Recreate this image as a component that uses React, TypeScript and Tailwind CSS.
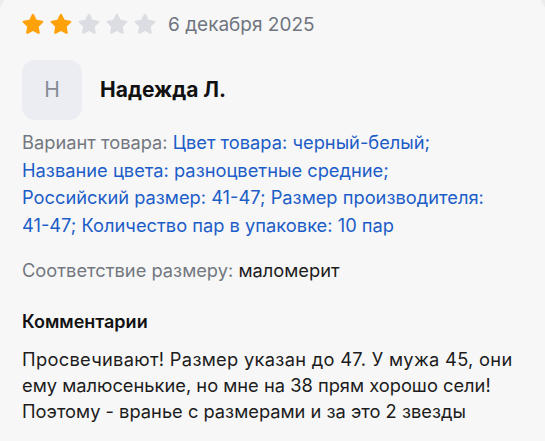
import React from "react";

const Star = ({ filled }: { filled: boolean }) => (
  <svg width="26" height="26" viewBox="0 0 24 24" className="block">
    <path
      d="M12 2.6c.4 0 .7.2.9.6l2.4 4.9 5.3.8c.9.1 1.2 1.2.6 1.8l-3.9 3.8.9 5.4c.2.9-.8 1.5-1.5 1.1L12 18.5l-4.8 2.5c-.8.4-1.7-.2-1.5-1.1l.9-5.4-3.9-3.8c-.6-.6-.3-1.7.6-1.8l5.3-.8 2.4-4.9c.2-.4.6-.6 1-.6z"
      fill={filled ? "#ffa20a" : "#dcdde2"}
    />
  </svg>
);

export default function App() {
  return (
    <div
      className="w-[545px] h-[441px] overflow-hidden bg-[#ececec]"
      style={{ fontFamily: "Inter, 'Noto Sans', sans-serif" }}
    >
      <div className="h-[470px] -mt-[10px] -mx-[2px] rounded-[28px] bg-[#f7f7f7] pl-[24px] pr-4 pt-[20px]">
        <div className="flex items-center mt-[1px]">
          <div className="flex gap-[2px] -ml-[2px]">
            <Star filled />
            <Star filled />
            <Star filled={false} />
            <Star filled={false} />
            <Star filled={false} />
          </div>
          <span className="ml-[10px] text-[19px] text-[#6f7480] leading-none">6 декабря 2025</span>
        </div>
        <div className="flex items-center mt-[23px]">
          <div className="w-[60px] h-[60px] rounded-[13px] bg-[#ebedf2] flex items-center justify-center text-[21px] text-[#868b96]">
            Н
          </div>
          <span className="ml-[18px] text-[21px] font-bold text-[#111]">Надежда Л.</span>
        </div>
        <p className="mt-[9px] text-[18.3px] leading-[27.5px] text-[#1c5dc7]">
          <span className="text-[#737780]">Вариант товара: </span>
          Цвет товара: черный-белый;
          <br />
          Название цвета: разноцветные средние;
          <br />
          Российский размер: 41-47; Размер производителя:
          <br />
          41-47; Количество пар в упаковке: 10 пар
        </p>
        <p className="mt-[18px] text-[18.3px] leading-[27px] text-[#1c1c1c]">
          <span className="text-[#737780]">Соответствие размеру: </span>маломерит
        </p>
        <p className="mt-[24px] text-[18px] leading-[27px] font-semibold text-[#111]">Комментарии</p>
        <p className="mt-[11px] text-[18.3px] leading-[26px] text-[#1c1c1c]">
          <span className="tracking-[0.3px]">Просвечивают! Размер указан до 47. У мужа 45, они</span>
          <br />
          ему малюсенькие, но мне на 38 прям хорошо сели!
          <br />
          Поэтому - вранье с размерами и за это 2 звезды
        </p>
      </div>
    </div>
  );
}
